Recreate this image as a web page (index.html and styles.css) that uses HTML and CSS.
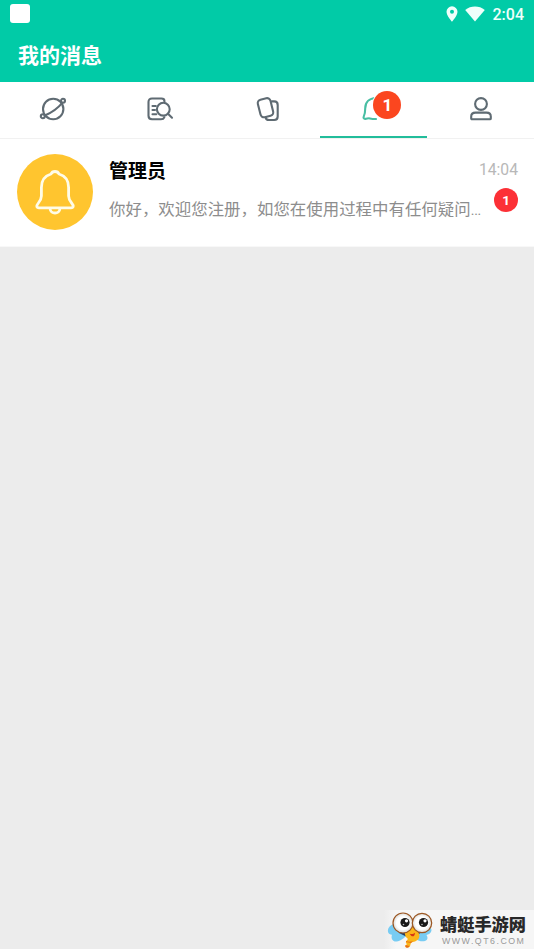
FILE: index.html
```html
<!DOCTYPE html>
<html lang="zh-CN">
<head>
<meta charset="utf-8">
<title>我的消息</title>
<link rel="stylesheet" href="styles.css">
</head>
<body>
<div class="app">
  <header class="header">
    <div class="status">
      <span class="status-app"></span>
      <div class="status-icons">
        <svg class="pin" width="12" height="16" viewBox="0 0 12 16"><path fill="currentColor" fill-rule="evenodd" d="M6 .3A5.500 5.500 0 0 0 .5 5.800C.5 9.800 6 15.700 6 15.700s5.500-5.900 5.500-9.900A5.500 5.500 0 0 0 6 .3Zm0 3.500a2 2 0 1 1 0 4 2 2 0 0 1 0-4Z"/></svg>
        <svg class="wifi" width="20" height="16" viewBox="0 0 20 16"><path fill="currentColor" d="M.2 4C5.800-.6 14.200-.6 19.800 4L10 15.500Z"/></svg>
        <span class="clock">2:04</span>
      </div>
    </div>
    <h1 class="title">我的消息</h1>
  </header>

  <nav class="tabs">
    <a class="tab">
      <svg width="28" height="28" viewBox="0 0 28 28"><circle cx="14.200" cy="14" r="10.200"/><circle cx="24" cy="5.800" r="2"/><circle cx="3.800" cy="21.200" r="2"/><path d="M5.800 20.500C12.500 17.600 19 13 23.300 7.800"/></svg>
    </a>
    <a class="tab">
      <svg width="28" height="28" viewBox="0 0 28 28"><path d="M18.500 6.500C18.500 4.200 17.500 3.500 15.500 3.500H6q-3.500 0-3.500 3.500V20.800q0 3.500 3.500 3.500H15q2.500 0 3.300-2M6.500 11h3.300M6.500 15h2.500M6.500 19.200h3.800"/><circle cx="17.300" cy="14.200" r="6.400"/><path d="m22 18.800 4 3.900"/></svg>
    </a>
    <a class="tab">
      <svg width="28" height="28" viewBox="0 0 28 28"><rect x="6" y="3.700" width="13" height="18" rx="3.500" transform="rotate(-14 12.500 12.700)"/><path d="M19 6.400h2.200q3.500 0 3.500 3.500V21.500q0 3.500-3.500 3.500h-5.200q-3 0-3.300-2.500"/></svg>
    </a>
    <a class="tab active">
      <svg width="28" height="28" viewBox="0 0 28 28"><path d="M16 3C9 3.300 5.200 7.500 5.200 13.500c0 4-.2 5.400-1.400 7.900-.7 1.500 0 2.700 1.600 2.500 1.900-.2 2.800-.9 4.500-.5 2.200.5 4 .8 6.100.6"/></svg>
      <span class="tab-badge">1</span>
    </a>
    <a class="tab">
      <svg width="28" height="28" viewBox="0 0 28 28"><circle cx="14" cy="9" r="5.900"/><path d="M8.500 17.600h11c3 0 4.300 1.400 4.300 3.800v2q0 .9-.9.900H5.100q-.9 0-.9-.9v-2c0-2.400 1.300-3.800 4.300-3.800Z"/></svg>
    </a>
  </nav>

  <main class="list">
    <article class="message">
      <div class="avatar">
        <svg width="76" height="76" viewBox="0 0 76 76"><path d="M38 17.500c-1.900 0-3.400 1-4 2.500-6.700 2-9.600 7-9.600 13.500v8.500c0 3-1 4.500-3 7-2.500 3-1.900 4.800.6 4.800h32c2.500 0 3.100-1.800.6-4.800-2-2.500-3-4-3-7v-8.500c0-6.500-2.900-11.500-9.600-13.500-.6-1.500-2.100-2.500-4-2.500ZM33 54.500c.5 6 9.500 6 10 0"/></svg>
      </div>
      <div class="content">
        <div class="line">
          <h2 class="name">管理员</h2>
          <time class="time">14:04</time>
        </div>
        <div class="line preview-line">
          <p class="preview">你好，欢迎您注册，如您在使用过程中有任何疑问<span class="dots">...</span></p>
          <span class="unread">1</span>
        </div>
      </div>
    </article>
  </main>

  <footer class="brand">
    <svg class="mascot" width="48" height="38" viewBox="0 0 48 38">
      <defs><radialGradient id="eye"><stop offset=".65" stop-color="#fff"/><stop offset="1" stop-color="#d9d9d6"/></radialGradient></defs>
      <path fill="#78ccf3" d="M13 14C7 11 0 15 1 21c.6 2 2 2.500 4 2.700-1.500 4 1 7.500 5 6.700 5-.8 9-5 11-9l5 1c1 6 7 9 12 7.500 3-1 3-3.500 1.500-6 4-.8 6-4 4.500-6.400-2-3-7-3-11-1Z"/>
      <path fill="#233f68" d="m10 14 12 8-2 4-8-4Zm26 1-12 7 3 4 8-5Z"/>
      <path fill="#fbb51a" d="M19 14h12v7c3 4 1 9-5 10-3 .6-2 2.500-3 4-1 2-4 2-5 0l2-2c-2-1-1-3 1-5-4-3-4-8-2-14Z"/>
      <path fill="#e76d18" d="M19 30c2 1 5 1 7 0l-2 2-5-1Zm-.5 4 4 1c-.8 2-3 2-4 1Z"/>
      <circle cx="16" cy="12" r="10" fill="url(#eye)" stroke="#9c5723" stroke-width="1.200"/>
      <circle cx="35" cy="12" r="9.700" fill="url(#eye)" stroke="#9c5723" stroke-width="1.200"/>
      <circle cx="18" cy="11.500" r="4.600" fill="#191919"/><circle cx="36.500" cy="11.500" r="4.600" fill="#191919"/>
      <circle cx="19.500" cy="9.800" r="1.600" fill="#fff"/><circle cx="38" cy="9.800" r="1.600" fill="#fff"/>
      <circle cx="16.500" cy="13.500" r=".8" fill="#bbb"/><circle cx="35" cy="13.500" r=".8" fill="#bbb"/>
      <path fill="#d63716" d="M22.500 22.500c2 1 4 .5 5.500-.8-.2 4-3 5.300-5.500.8Z"/>
    </svg>
    <div class="brand-text">
      <span class="brand-name">蜻蜓手游网</span>
      <span class="brand-url">WWW.QT6.COM</span>
    </div>
  </footer>
</div>
</body>
</html>
```
FILE: styles.css
```css
* { box-sizing: border-box; }
body {
  margin: 0;
  background: #ececec;
  font-family: Roboto, "Noto Sans CJK SC", sans-serif;
}
h1, h2, p { margin: 0; }
svg { display: block; flex: none; }
.app { display: flex; flex-direction: column; height: 949px; overflow: hidden; }

.header { height: 82px; background: #01cba7; color: #fff; }
.status {
  display: flex;
  justify-content: space-between;
  align-items: center;
  height: 28px;
  padding: 0 10px;
}
.status-app { width: 20px; height: 19px; margin-bottom: 1px; border-radius: 3px; background: #fff; }
.status-icons { display: flex; align-items: center; color: #effffb; }
.pin { margin-right: 7px; }
.wifi { margin-right: 8px; }
.clock { font-size: 16px; font-weight: 500; line-height: 28px; padding-top: 1px; }
.title { padding-left: 18px; font-size: 21px; font-weight: 700; line-height: 56px; }

.tabs {
  display: grid;
  grid-template-columns: repeat(5, 1fr);
  height: 57px;
  background: #fff;
  border-bottom: 1px solid #f1f1f1;
}
.tab {
  position: relative;
  display: flex;
  justify-content: center;
  height: 56px;
  padding-top: 13px;
  color: #5f6b73;
}
.tab svg, .avatar svg { fill: none; stroke: currentColor; stroke-linecap: round; stroke-linejoin: round; }
.tab svg { stroke-width: 2.1; }
.tab.active { color: #48bea3; border-bottom: 2px solid #22bd9b; }
.tab-badge {
  position: absolute;
  top: 9px;
  left: 53px;
  width: 28px;
  height: 28px;
  border-radius: 50%;
  background: #fb461f;
  box-shadow: 0 0 0 1px #fff;
  color: #fff;
  font-size: 17px;
  font-weight: 700;
  line-height: 29px;
  text-align: center;
}

.message {
  display: flex;
  height: 108px;
  padding: 15px 16px 0;
  background: #fff;
  border-bottom: 1px solid #f8f8f8;
}
.avatar {
  display: flex;
  justify-content: center;
  flex: none;
  width: 76px;
  height: 76px;
  margin-left: .5px;
  border-radius: 50%;
  background: #ffc52f;
  color: #fffce8;
}
.avatar svg { stroke-width: 2.8; }
.content { flex: 1; min-width: 0; margin-left: 16.5px; }
.line { display: flex; align-items: center; justify-content: space-between; height: 32px; }
.name { padding-top: 3px; color: #000; font-size: 19px; font-weight: 700; line-height: 30px; }
.time { color: #b8b8b8; font-size: 15.7px; line-height: 28px; }
.preview-line { height: 42px; }
.preview { padding-top: 6px; color: #8d8d8d; font-size: 16.45px; line-height: 24px; white-space: nowrap; }
.dots { font-size: 14px; letter-spacing: -.2px; }
.unread {
  flex: none;
  width: 24px;
  height: 24px;
  margin-bottom: 14px;
  border-radius: 50%;
  background: #fc3036;
  color: #fff;
  font-size: 13.5px;
  font-weight: 700;
  line-height: 24px;
  text-align: center;
}

.brand {
  display: flex;
  align-items: center;
  align-self: flex-end;
  width: 150px;
  height: 39px;
  margin-top: auto;
  padding-left: 3px;
  background: linear-gradient(90deg, #ececec, #f6f6f6 8%, #f6f6f6);
}
.brand-text { display: flex; flex-direction: column; margin-left: 5px; white-space: nowrap; }
.brand-name { color: #292929; font-family: "Noto Sans CJK SC", sans-serif; font-size: 17.2px; font-weight: 900; line-height: 22px; }
.brand-url { padding: 1px 0 0 2px; color: #999; font-family: "Liberation Sans", sans-serif; font-size: 8.8px; line-height: 10px; letter-spacing: 1.5px; }
```
